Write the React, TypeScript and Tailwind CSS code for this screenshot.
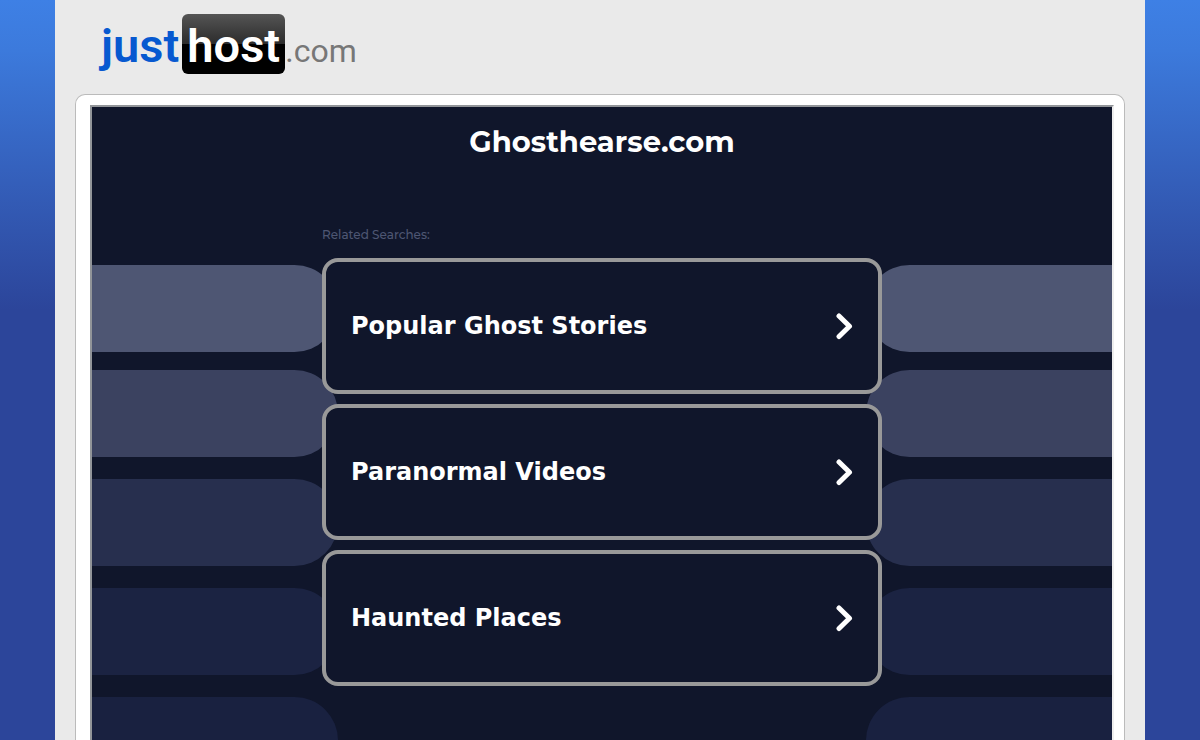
const searches = [
  { label: 'Popular Ghost Stories', href: '#popular-ghost-stories' },
  { label: 'Paranormal Videos', href: '#paranormal-videos' },
  { label: 'Haunted Places', href: '#haunted-places' },
]

const stripes = [
  'bg-[#4e5673]',
  'bg-[#3b4260]',
  'bg-[#272f4e]',
  'bg-[#1b2342]',
  'bg-[#192140]',
]

function Logo() {
  return (
    <a
      href="#home"
      aria-label="justhost.com"
      className="flex h-[60px] items-baseline font-['Roboto',sans-serif] leading-[64px]"
    >
      <span className="text-[47px] font-semibold text-[#0759d0]">just</span>
      <span className="ml-[3px] h-[60px] w-[103px] rounded-md bg-linear-to-b from-[#555] from-0% via-[#2c2c2c] via-50% to-black to-50% text-center text-[47px] font-semibold text-white">
        host
      </span>
      <span className="text-[32px] text-[#777]">.com</span>
    </a>
  )
}

function Chevron() {
  return (
    <svg width="18" height="28" viewBox="0 0 18 28" fill="none" aria-hidden="true">
      <path d="M4 4 14.5 14.3 4 24.5" stroke="#fff" strokeWidth="5" strokeLinecap="round" strokeLinejoin="round" />
    </svg>
  )
}

function Stripes({ side }: { side: 'left' | 'right' }) {
  return (
    <div className="flex w-[246px] flex-col gap-[22px]">
      {stripes.map((color) => (
        <div
          key={color}
          className={`h-[87px] shrink-0 first:-mb-1 ${color} ${side === 'left' ? 'rounded-r-[44px]' : 'rounded-l-[44px]'}`}
        />
      ))}
    </div>
  )
}

export default function App() {
  return (
    <div className="min-h-screen bg-[#2c459a] bg-linear-to-b from-[#3e80e5] from-0% via-[#3c7adc] via-[50px] to-[#2c459a] to-[310px]">
      <div className="mx-auto flex min-h-screen w-full max-w-[1090px] flex-col bg-[#eaeaea] px-5">
        <header className="px-[26px] pt-[14px] pb-5">
          <Logo />
        </header>

        <main className="flex flex-1 flex-col rounded-t-[10px] border border-b-0 border-[#bbb] bg-white pt-[10px] pr-[10px] pl-[14px]">
          <div className="relative flex-1 overflow-hidden border-2 border-b-0 border-t-[#929599] border-l-[#929599] border-r-[#eee] bg-[#10162b] font-['Montserrat','Inter',sans-serif]">
            {/* Background stripes */}
            <div className="absolute inset-0 flex justify-between pt-[158px]" aria-hidden="true">
              <Stripes side="left" />
              <Stripes side="right" />
            </div>

            <div className="relative mx-auto max-w-[560px] pt-4">
              <h1 className="text-center text-[29px] leading-[38px] font-bold text-white">Ghosthearse.com</h1>
              <p className="mt-[66px] text-xs leading-4 font-medium text-[#4e5673]">Related Searches:</p>
              <nav className="mt-[15px] flex flex-col gap-[10px]">
                {searches.map((item) => (
                  <a
                    key={item.href}
                    href={item.href}
                    className="flex h-[136px] items-center justify-between rounded-2xl border-4 border-[#999] bg-[#10162b] px-[25px] font-['DejaVu_Sans',sans-serif] text-[24px] leading-8 font-bold text-white"
                  >
                    {item.label}
                    <Chevron />
                  </a>
                ))}
              </nav>
            </div>
          </div>
        </main>
      </div>
    </div>
  )
}
